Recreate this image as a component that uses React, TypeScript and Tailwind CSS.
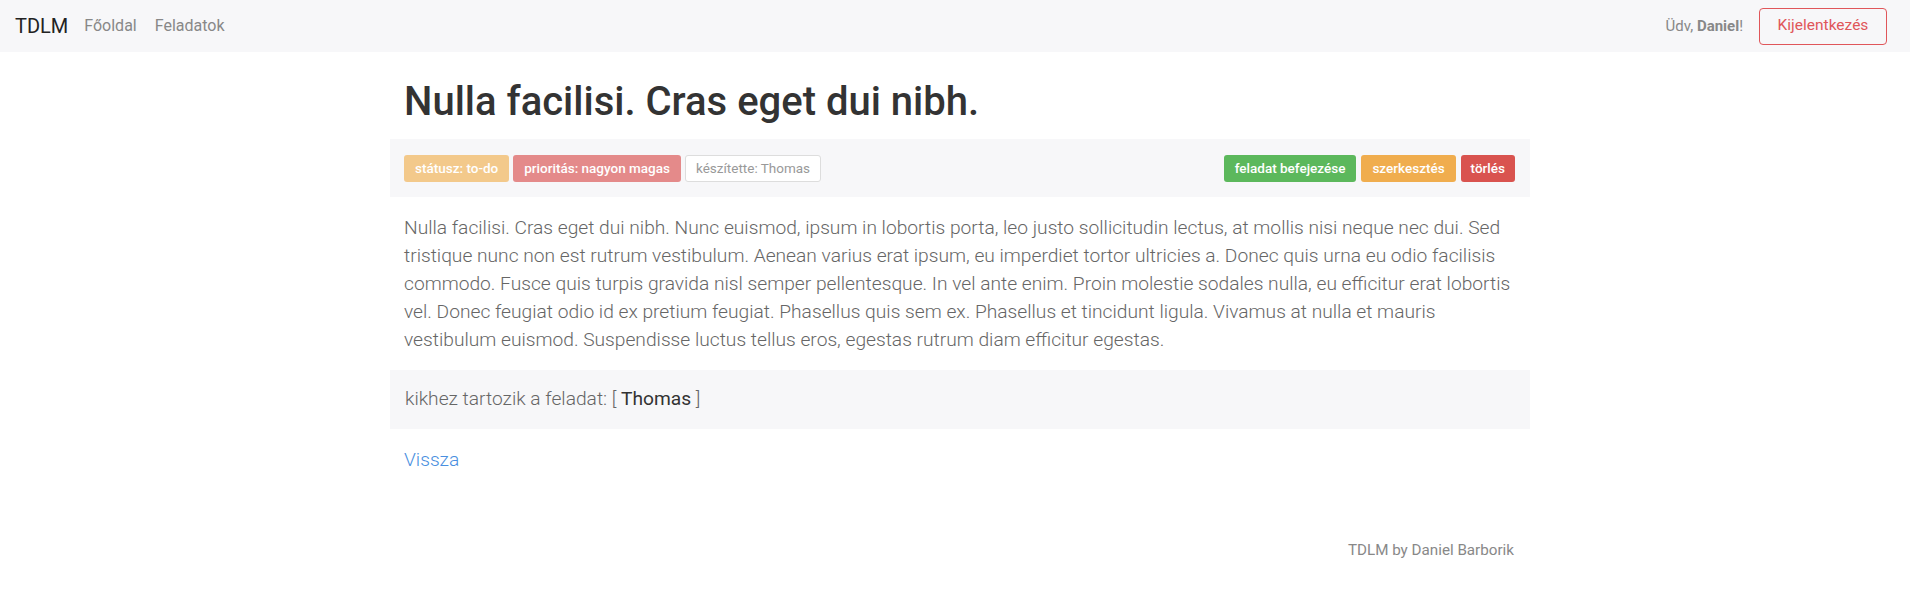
export default function App() {
  return (
    <div className="min-h-[606px] bg-white font-['Roboto',sans-serif]">
      <nav className="h-[52px] bg-[#f7f7f9] flex items-center justify-between pl-[15px] pr-[23px]">
        <div className="flex items-center">
          <span className="text-[20px] text-[#222] mr-[16px]">TDLM</span>
          <a className="text-[16px] text-[#888] mr-[18px]">Főoldal</a>
          <a className="text-[16px] text-[#888]">Feladatok</a>
        </div>
        <div className="flex items-center">
          <span className="text-[15px] text-[#888] mr-[16px]">
            Üdv, <b className="font-bold">Daniel</b>!
          </span>
          <button className="h-[37px] w-[128px] border border-[#e0565a] rounded-[4px] text-[15.5px] text-[#e0565a]">
            Kijelentkezés
          </button>
        </div>
      </nav>

      <div className="pl-[10px]">
        <div className="mx-auto w-[1140px]">
          <h1 className="mt-[26px] mb-[13px] px-[14px] text-[40px] leading-[1.2] font-medium text-[#333]">
            Nulla facilisi. Cras eget dui nibh.
          </h1>

          <div className="h-[58px] bg-[#f7f7f9] flex items-center justify-between pl-[14px] pr-[15px]">
            <div className="flex gap-[4px] text-[13.5px]">
              <span className="h-[27px] px-[11px] flex items-center rounded-[3px] bg-[#f3c98b] text-white font-medium">státusz: to-do</span>
              <span className="h-[27px] px-[11px] flex items-center rounded-[3px] bg-[#e48a8a] text-white font-medium">prioritás: nagyon magas</span>
              <span className="h-[27px] px-[10px] flex items-center rounded-[3px] bg-white border border-[#ddd] text-[#999]">készítette: Thomas</span>
            </div>
            <div className="flex gap-[5px] text-[13.5px] font-medium text-white">
              <button className="h-[27px] px-[11px] rounded-[3px] bg-[#5cb85c]">feladat befejezése</button>
              <button className="h-[27px] px-[11px] rounded-[3px] bg-[#f0ad4e]">szerkesztés</button>
              <button className="h-[27px] px-[10px] rounded-[3px] bg-[#d9534f]">törlés</button>
            </div>
          </div>

          <p className="mt-[17px] mb-[16px] px-[14px] text-[19.2px] leading-[28px] font-light text-[#666]">
            Nulla facilisi. Cras eget dui nibh. Nunc euismod, ipsum in lobortis porta, leo justo sollicitudin lectus, at mollis nisi neque nec dui. Sed tristique nunc non est rutrum vestibulum. Aenean varius erat ipsum, eu imperdiet tortor ultricies a. Donec quis urna eu odio facilisis commodo. Fusce quis turpis gravida nisl semper pellentesque. In vel ante enim. Proin molestie sodales nulla, eu efficitur erat lobortis vel. Donec feugiat odio id ex pretium feugiat. Phasellus quis sem ex. Phasellus et tincidunt ligula. Vivamus at nulla et mauris vestibulum euismod. Suspendisse luctus tellus eros, egestas rutrum diam efficitur egestas.
          </p>

          <div className="h-[59px] bg-[#f7f7f9] flex items-center px-[15px] text-[19.2px] font-light text-[#666]">
            <span>
              kikhez tartozik a feladat: [ <span className="font-normal text-[#333]">Thomas</span> ]
            </span>
          </div>

          <div className="mt-[17px] px-[14px]">
            <a className="text-[19.2px] leading-[28px] font-light text-[#4a8fe0]">Vissza</a>
          </div>

          <div className="mt-[65px] flex justify-end pr-[16px]">
            <span className="text-[15.2px] text-[#888]">TDLM by Daniel Barborik</span>
          </div>
        </div>
      </div>
    </div>
  );
}
